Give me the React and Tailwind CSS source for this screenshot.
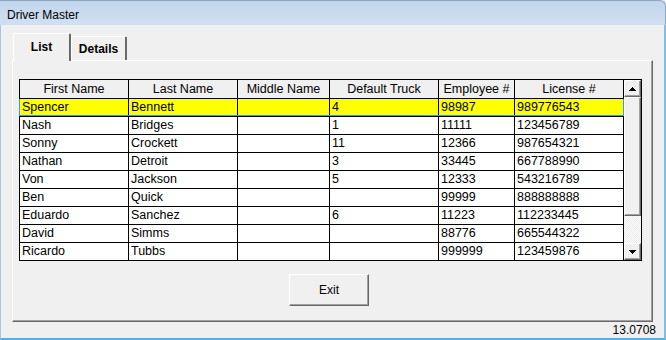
import React from 'react';

const cols = ['w-[109px]', 'w-[109px]', 'w-[92px]', 'w-[109px]', 'w-[76px]', 'w-[109px]'];
const headers = ['First Name', 'Last Name', 'Middle Name', 'Default Truck', 'Employee #', 'License #'];

const drivers = [
  ['Spencer', 'Bennett', '', '4', '98987', '989776543'],
  ['Nash', 'Bridges', '', '1', '11111', '123456789'],
  ['Sonny', 'Crockett', '', '11', '12366', '987654321'],
  ['Nathan', 'Detroit', '', '3', '33445', '667788990'],
  ['Von', 'Jackson', '', '5', '12333', '543216789'],
  ['Ben', 'Quick', '', '', '99999', '888888888'],
  ['Eduardo', 'Sanchez', '', '6', '11223', '112233445'],
  ['David', 'Simms', '', '', '88776', '665544322'],
  ['Ricardo', 'Tubbs', '', '', '999999', '123459876'],
];

const btn3d =
  'bg-[#f0f0f0] border border-t-white border-l-white border-r-[#696969] border-b-[#696969] shadow-[inset_-1px_-1px_0_#a0a0a0]';

function Arrow({ down }) {
  return (
    <svg width="7" height="4" viewBox="0 0 7 4" shapeRendering="crispEdges">
      {down ? (
        <>
          <rect x="0" y="0" width="7" height="1" fill="#000" />
          <rect x="1" y="1" width="5" height="1" fill="#000" />
          <rect x="2" y="2" width="3" height="1" fill="#000" />
          <rect x="3" y="3" width="1" height="1" fill="#000" />
        </>
      ) : (
        <>
          <rect x="3" y="0" width="1" height="1" fill="#000" />
          <rect x="2" y="1" width="3" height="1" fill="#000" />
          <rect x="1" y="2" width="5" height="1" fill="#000" />
          <rect x="0" y="3" width="7" height="1" fill="#000" />
        </>
      )}
    </svg>
  );
}

function Scrollbar() {
  return (
    <div className="w-[17px] flex flex-col">
      <div className={`h-[17px] flex items-center justify-center ${btn3d}`}>
        <Arrow />
      </div>
      <div className={`h-[119px] ${btn3d}`} />
      <div className="h-[27px] bg-[#f7f7f7] bg-[image:repeating-conic-gradient(#ffffff_0_25%,#e8e8e8_0_50%)] bg-[length:2px_2px]" />
      <div className={`h-[17px] flex items-center justify-center ${btn3d}`}>
        <Arrow down />
      </div>
    </div>
  );
}

export default function App() {
  return (
    <div className="w-[666px] h-[340px] flex flex-col bg-[#f0f0f0] text-[12px] text-black font-['Liberation_Sans',Arial,sans-serif] overflow-hidden">
      {/* Title bar */}
      <div className="h-[25px] shrink-0 pl-[7px] pt-[7px] leading-[14px] rounded-tr-[6px] border-t border-r border-[#8fa6c0] bg-gradient-to-b from-[#c1d5ec] to-[#d1e0f1]">
        Driver Master
      </div>

      {/* Window body */}
      <div className="flex-1 flex flex-col border-l border-l-[#a9c4e3] border-r-2 border-r-[#7cc0ea] border-b-2 border-b-[#4fb3e6] pl-[11px] pt-[8px]">
        {/* Tabs */}
        <div className="flex items-end pl-[1px] h-[27px]">
          <div className="relative z-10 -mb-px w-[58px] h-[28px] bg-[#f0f0f0] border-t border-l border-white border-r-2 border-r-[#696969] rounded-t-[2px] flex items-center justify-center font-bold leading-[14px] pb-[1px]">
            List
          </div>
          <div className="w-[56px] h-[24px] bg-[#f0f0f0] border-t border-l border-white border-r-2 border-r-[#696969] rounded-t-[2px] flex items-center justify-center font-bold leading-[14px] pt-[1px]">
            Details
          </div>
        </div>

        {/* Tab panel */}
        <div className="w-[641px] h-[262px] border-t border-l border-white border-r border-b border-r-[#696969] border-b-[#696969] shadow-[inset_-1px_-1px_0_#a0a0a0] pl-[6px] pt-[18px] flex flex-col">
          {/* Grid */}
          <div className="w-[623px] h-[182px] border border-black bg-white flex text-[12.5px]">
            <div className="w-[604px] flex flex-col">
              <div className="h-[19px] flex border-b border-black bg-[#f0f0f0]">
                {headers.map((h, i) => (
                  <div key={h} className={`${cols[i]} border-r border-black text-center leading-[18px] whitespace-nowrap`}>
                    {h}
                  </div>
                ))}
              </div>
              {drivers.map((d, r) => {
                const last = r === drivers.length - 1;
                const selected = r === 0;
                return (
                  <div
                    key={d[0]}
                    className={`relative flex ${last ? 'h-[17px]' : 'h-[18px] border-b border-black'} ${selected ? 'bg-[#ffff00]' : ''}`}
                  >
                    {d.map((v, i) => (
                      <div key={i} className={`${cols[i]} border-r border-black pl-[2px] leading-[17px] whitespace-nowrap overflow-hidden`}>
                        {v}
                      </div>
                    ))}
                    {selected && (
                      <span className="absolute -left-px top-0 right-0 bottom-0 border-l border-r border-b border-[#3399ff] pointer-events-none" />
                    )}
                  </div>
                );
              })}
            </div>
            <Scrollbar />
          </div>

          <button className={`mt-[13px] ml-[270px] w-[80px] h-[32px] ${btn3d} leading-[14px]`}>Exit</button>
        </div>

        <div className="mt-[1px] pr-[8px] text-right leading-[14px]">13.0708</div>
      </div>
    </div>
  );
}
